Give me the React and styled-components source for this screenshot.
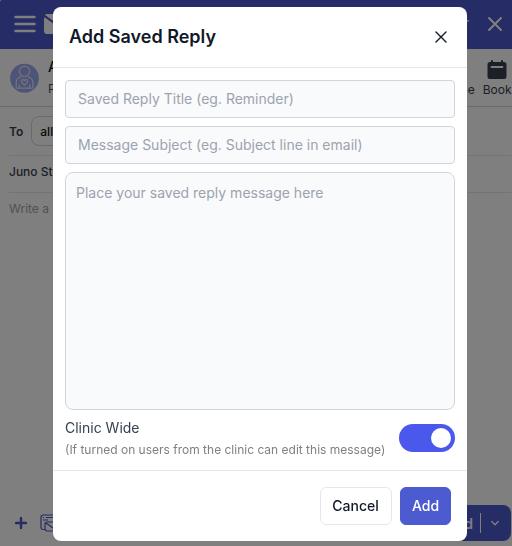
import React from 'react';
import styled, { createGlobalStyle } from 'styled-components';

const GlobalStyle = createGlobalStyle`
  * {
    box-sizing: border-box;
  }

  body {
    margin: 0;
    background: #fff;
    color: #1f2937;
    font-family: Inter, "Liberation Sans", sans-serif;
    overflow: hidden;
  }

  button, input, textarea {
    font-family: inherit;
  }
`;

const Page = styled.div`
  display: flex;
  flex-direction: column;
  height: 546px;
  overflow: hidden;
`;

const TopBar = styled.header`
  display: flex;
  align-items: center;
  height: 49px;
  flex-shrink: 0;
  padding: 0 8px 2px 14px;
  background: #4a58cc;
  border-top-left-radius: 2px;
  color: #fff;

  svg {
    display: block;
  }
`;

const MailIcon = styled.svg`
  margin-left: 8px;
`;

const TopTitle = styled.div`
  margin-left: auto;
  margin-right: 17px;
  font-size: 17px;
  line-height: 20px;
`;

const PatientBar = styled.div`
  display: flex;
  align-items: center;
  height: 58px;
  flex-shrink: 0;
  padding-left: 10px;
  border-bottom: 1px solid #d1d5db;
`;

const PatientInfo = styled.div`
  display: flex;
  flex-direction: column;
  margin-left: 9px;
`;

const PatientName = styled.div`
  font-size: 14px;
  line-height: 20px;
  font-weight: 500;
  color: #111;
`;

const PatientLink = styled.div`
  font-size: 12px;
  line-height: 20px;
  color: #4b5563;
  margin-top: 2px;
`;

const Actions = styled.div`
  display: flex;
  margin-left: auto;
  gap: 8px;
  height: 100%;
  padding: 11px 0.5px 0 0;
`;

const Action = styled.div`
  display: flex;
  flex-direction: column;
  align-items: center;
  justify-content: space-between;
  height: 38px;
  font-size: 12px;
  line-height: 16px;
  color: #374151;
`;

const Line = styled.div`
  display: flex;
  align-items: center;
  height: ${({ $height }) => $height}px;
  flex-shrink: 0;
  margin: 0 1px 0 9px;
  padding-bottom: ${({ $lift }) => $lift || 0}px;
  border-bottom: ${({ $last }) => ($last ? 'none' : '1px solid #e5e7eb')};
  font-size: 12px;
  font-weight: ${({ $muted }) => ($muted ? 400 : 500)};
  color: ${({ $muted }) => ($muted ? '#9ca3af' : '#374151')};
`;

const To = styled.span`
  font-weight: 600;
  margin-right: 8px;
`;

const Chip = styled.span`
  display: flex;
  align-items: center;
  height: 30px;
  width: 90px;
  padding-left: 8px;
  border: 1px solid #d1d5db;
  border-radius: 8px;
  font-weight: 500;
  color: #111;
`;

const ComposeBar = styled.div`
  display: flex;
  align-items: center;
  gap: 13px;
  height: 36px;
  margin-top: auto;
  margin-bottom: 5px;
  padding: 0 1px 0 15px;
  flex-shrink: 0;
  color: #4a58cc;
`;

const SendButton = styled.div`
  display: flex;
  align-items: center;
  justify-content: flex-end;
  width: 90px;
  height: 36px;
  margin-left: auto;
  padding-right: 11px;
  border-radius: 8px;
  background: #4a58cc;
  color: #fff;
  font-size: 14px;
  font-weight: 600;
`;

const Divider = styled.span`
  width: 1px;
  height: 20px;
  margin: 0 9px 0 7px;
  background: #fff;
`;

const Overlay = styled.div`
  position: fixed;
  inset: 0;
  display: flex;
  justify-content: center;
  align-items: flex-start;
  padding: 7px 45px 0 53px;
  background: rgba(0, 0, 0, 0.5);
`;

const Modal = styled.div`
  display: flex;
  flex-direction: column;
  width: 414px;
  height: 534px;
  border-radius: 8px;
  background: #fff;
`;

const ModalHeader = styled.div`
  display: flex;
  justify-content: space-between;
  align-items: center;
  height: 61px;
  padding: 0 20px 0 16px;
  border-bottom: 1px solid #e5e7eb;
`;

const ModalTitle = styled.h3`
  margin: 0;
  font-size: 18px;
  line-height: 28px;
  font-weight: 600;
  color: #111827;
`;

const CloseButton = styled.button`
  display: flex;
  padding: 0;
  border: none;
  background: none;
  color: #111827;
`;

const ModalBody = styled.div`
  display: flex;
  flex-direction: column;
  gap: 8px;
  height: 402px;
  padding: 12px;
`;

const Input = styled.input`
  width: 100%;
  height: 38px;
  padding: 0 12px 2px;
  border: 1px solid #d1d5db;
  border-radius: 4px;
  outline: none;
  background: #f9fafb;
  font-size: 14px;

  &::placeholder {
    color: #9ca3af;
    opacity: 1;
  }
`;

const TextArea = styled.textarea`
  display: block;
  width: 100%;
  height: 238px;
  padding: 10px;
  border: 1px solid #d1d5db;
  border-radius: 8px;
  outline: none;
  resize: none;
  background: #f9fafb;
  font-size: 14px;
  line-height: 20px;

  &::placeholder {
    color: #9ca3af;
    opacity: 1;
  }
`;

const ClinicRow = styled.div`
  display: flex;
  justify-content: space-between;
  align-items: center;
  height: 40px;
`;

const ClinicLabel = styled.div`
  font-size: 14px;
  line-height: 20px;
  color: #374151;
`;

const ClinicHint = styled.div`
  margin-top: 4px;
  font-size: 12px;
  line-height: 16px;
  color: #808080;
  white-space: nowrap;
`;

const Switch = styled.div`
  display: flex;
  justify-content: ${({ $on }) => ($on ? 'flex-end' : 'flex-start')};
  width: 56px;
  height: 28px;
  padding: 4px;
  border-radius: 14px;
  background: ${({ $on }) => ($on ? '#4a58ec' : '#d1d5db')};
`;

const Knob = styled.span`
  width: 20px;
  height: 20px;
  border-radius: 50%;
  background: #fff;
`;

const ModalFooter = styled.div`
  display: flex;
  justify-content: flex-end;
  gap: 8px;
  padding: 16px;
  border-top: 1px solid #e5e7eb;
`;

const Button = styled.button`
  height: 38px;
  width: ${({ $primary }) => ($primary ? 51 : 72)}px;
  padding: 0 ${({ $primary }) => ($primary ? 0 : 1)}px 2px 0;
  border: 1px solid ${({ $primary }) => ($primary ? '#4c5bd0' : '#e5e7eb')};
  border-radius: 6px;
  background: ${({ $primary }) => ($primary ? '#4c5bd0' : '#fff')};
  color: ${({ $primary }) => ($primary ? '#fff' : '#111827')};
  font-size: 14px;
  font-weight: 500;
`;

const Menu = () => (
  <svg width="22" height="18" viewBox="0 0 22 18" fill="none" stroke="currentColor" strokeWidth="2.4" strokeLinecap="round">
    <path d="M1.5 2h19M1.5 9h19M1.5 16h19" />
  </svg>
);

const Cross = ({ size, inset, width }) => (
  <svg width={size} height={size} viewBox={`0 0 ${size} ${size}`} fill="none" stroke="currentColor" strokeWidth={width} strokeLinecap="round">
    <path d={`M${inset} ${inset}L${size - inset} ${size - inset}M${size - inset} ${inset}L${inset} ${size - inset}`} />
  </svg>
);

const Avatar = () => (
  <svg width="29" height="30" viewBox="0 0 29 30" fill="none" stroke="#e6e9f5" strokeWidth="1.2">
    <circle cx="14.5" cy="15.2" r="14.4" fill="#9aa8ee" stroke="none" />
    <circle cx="14.5" cy="8.3" r="5.2" />
    <path d="M11 14.2a5.2 5.2 0 0 0-4.8 5.2v4.8a1 1 0 0 0 1 1h14.6a1 1 0 0 0 1-1v-4.8a5.2 5.2 0 0 0-4.8-5.2M9.4 21.5v3.5M19.6 21.5v3.5" />
    <path d="M14.5 22.2l-2.7-2.8c-1.2-1.4.1-3.1 1.5-2.8.7.1 1 .6 1.2 1.1.2-.5.5-1 1.2-1.1 1.4-.3 2.7 1.4 1.5 2.8z" strokeLinejoin="round" />
  </svg>
);

const Calendar = () => (
  <svg width="20" height="20" viewBox="0 0 20 20" fill="#374151">
    <path d="M3 2h1V1a1 1 0 0 1 2 0v1h8V1a1 1 0 0 1 2 0v1h1a2.5 2.5 0 0 1 2.5 2.5v12A2.5 2.5 0 0 1 17 19H3a2.5 2.5 0 0 1-2.5-2.5v-12A2.5 2.5 0 0 1 3 2z" />
    <path d="M4.5 7h11" stroke="#fff" strokeWidth="1.8" strokeLinecap="round" />
  </svg>
);

const Templates = () => (
  <svg width="24" height="18" viewBox="0 0 24 18" fill="none" stroke="currentColor" strokeWidth="1.2" strokeLinejoin="round">
    <path d="M5 15.5H3A2 2 0 0 1 1 13.5V3a2 2 0 0 1 2-2h16v5M3 3.5h1M6 3.5h12M3 6h5" />
    <path d="M7 8h14v9H7a2 2 0 0 1-2-2v-5a2 2 0 0 1 2-2zM6 9l7 5 7-5" />
  </svg>
);

const App = () => {
  return (
    <>
      <GlobalStyle />
      <Page>
        <TopBar>
          <Menu />
          <MailIcon width="26" height="20" viewBox="0 0 26 20" fill="currentColor">
            <path d="M1 3.5L12.5 12 25 3.5V17a3 3 0 0 1-3 3H3a3 3 0 0 1-3-3V4z" />
            <path d="M2 0h21v2L13 9.5 1 1z" />
          </MailIcon>
          <TopTitle>r</TopTitle>
          <Cross size={18} inset={3} width={2} />
        </TopBar>
        <PatientBar>
          <Avatar />
          <PatientInfo>
            <PatientName>A</PatientName>
            <PatientLink>P</PatientLink>
          </PatientInfo>
          <Actions>
            <Action>
              <span />
              <span>e</span>
            </Action>
            <Action>
              <Calendar />
              <span>Book</span>
            </Action>
          </Actions>
        </PatientBar>
        <Line $height={49}>
          <To>To</To>
          <Chip>all</Chip>
        </Line>
        <Line $height={37} $lift={5}>Juno Sta</Line>
        <Line $height={32} $lift={2} $muted $last>Write a</Line>
        <ComposeBar>
          <svg width="12" height="12" viewBox="0 0 12 12" fill="none" stroke="currentColor" strokeWidth="2.4" strokeLinecap="round">
            <path d="M6 1v10M1 6h10" />
          </svg>
          <Templates />
          <SendButton>
            Send
            <Divider />
            <svg width="10" height="10" viewBox="0 0 10 10" fill="none" stroke="currentColor" strokeWidth="1.4" strokeLinecap="round" strokeLinejoin="round">
              <path d="M1.8 3.5L5 6.7l3.2-3.2" />
            </svg>
          </SendButton>
        </ComposeBar>
      </Page>
      <Overlay>
        <Modal>
          <ModalHeader>
            <ModalTitle>Add Saved Reply</ModalTitle>
            <CloseButton>
              <Cross size={12} inset={1} width={1.4} />
            </CloseButton>
          </ModalHeader>
          <ModalBody>
            <Input placeholder="Saved Reply Title (eg. Reminder)" />
            <Input placeholder="Message Subject (eg. Subject line in email)" />
            <TextArea placeholder="Place your saved reply message here" />
            <ClinicRow>
              <div>
                <ClinicLabel>Clinic Wide</ClinicLabel>
                <ClinicHint>(If turned on users from the clinic can edit this message)</ClinicHint>
              </div>
              <Switch $on>
                <Knob />
              </Switch>
            </ClinicRow>
          </ModalBody>
          <ModalFooter>
            <Button>Cancel</Button>
            <Button $primary>Add</Button>
          </ModalFooter>
        </Modal>
      </Overlay>
    </>
  );
};

export default App;
